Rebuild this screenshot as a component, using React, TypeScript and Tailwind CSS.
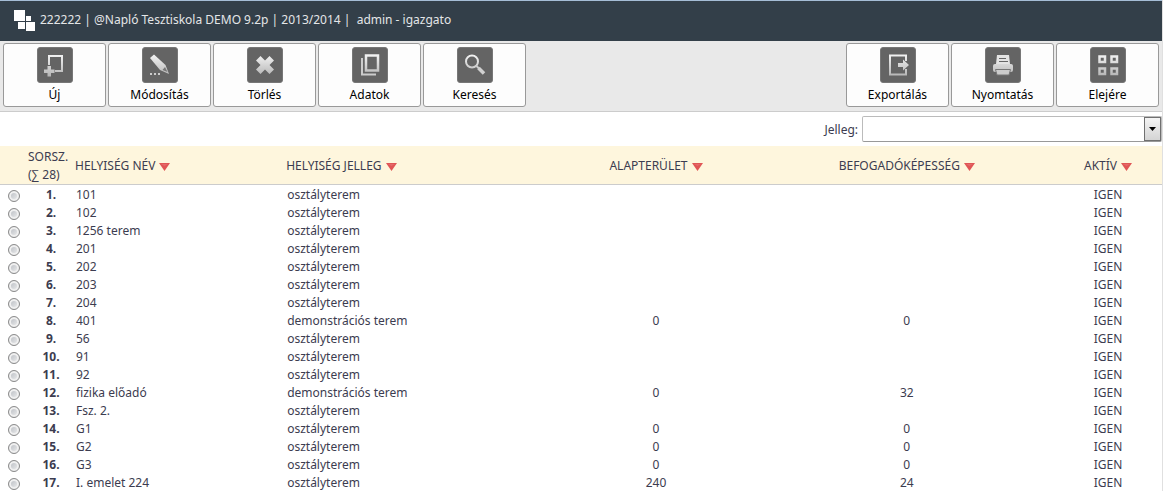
import { useState } from 'react'
import type { ReactNode } from 'react'

type Room = {
  id: number
  name: string
  kind: string
  area?: number
  capacity?: number
}

const CLASSROOM = 'osztályterem'
const DEMO_ROOM = 'demonstrációs terem'

const rooms: Room[] = [
  { id: 1, name: '101', kind: CLASSROOM },
  { id: 2, name: '102', kind: CLASSROOM },
  { id: 3, name: '1256 terem', kind: CLASSROOM },
  { id: 4, name: '201', kind: CLASSROOM },
  { id: 5, name: '202', kind: CLASSROOM },
  { id: 6, name: '203', kind: CLASSROOM },
  { id: 7, name: '204', kind: CLASSROOM },
  { id: 8, name: '401', kind: DEMO_ROOM, area: 0, capacity: 0 },
  { id: 9, name: '56', kind: CLASSROOM },
  { id: 10, name: '91', kind: CLASSROOM },
  { id: 11, name: '92', kind: CLASSROOM },
  { id: 12, name: 'fizika előadó', kind: DEMO_ROOM, area: 0, capacity: 32 },
  { id: 13, name: 'Fsz. 2.', kind: CLASSROOM },
  { id: 14, name: 'G1', kind: CLASSROOM, area: 0, capacity: 0 },
  { id: 15, name: 'G2', kind: CLASSROOM, area: 0, capacity: 0 },
  { id: 16, name: 'G3', kind: CLASSROOM, area: 0, capacity: 0 },
  { id: 17, name: 'I. emelet 224', kind: CLASSROOM, area: 240, capacity: 24 },
]

const icons: Record<string, ReactNode> = {
  new: (
    <>
      <path d="M12 18V9h13v15h-7" fill="none" stroke="url(#metal)" strokeWidth="2" />
      <path d="M10.500 19h3.500v3.500h3.500V26H14v3.500h-3.500V26H7v-3.500h3.500z" fill="url(#metal)" />
    </>
  ),
  edit: (
    <>
      <path d="M8 11l4-3.500 11.500 10.500 3.500 9-9-4z" fill="url(#metal)" />
      <path d="M23 20l2.500 5-5-2z" fill="#777" />
      <path d="M8 26h2v2H8zM12 26h2v2h-2zM16 26h2v2h-2z" fill="#ccc" />
    </>
  ),
  remove: (
    <path
      d="M13.500 9L18 13.500 22.500 9l4.500 4.500-4.500 4.500 4.500 4.500-4.500 4.500-4.500-4.500-4.500 4.500L9 22.500 13.500 18 9 13.500z"
      fill="url(#metal)"
    />
  ),
  data: (
    <>
      <path d="M14 8.500h12v15H14z" fill="none" stroke="url(#metal)" strokeWidth="2.500" />
      <path d="M10 11v16.500h14" fill="none" stroke="#ccc" strokeWidth="2" />
    </>
  ),
  search: (
    <>
      <circle cx="15" cy="14.500" r="6" fill="none" stroke="url(#metal)" strokeWidth="2" />
      <path d="M19 18.500l3 3" stroke="#ccc" strokeWidth="2" />
      <path d="M21.500 21l5.500 5.500" stroke="#d0d0d0" strokeWidth="3.500" />
    </>
  ),
  export: (
    <>
      <path d="M26 14V8.500H10v19h16V22" fill="none" stroke="url(#metal)" strokeWidth="2" />
      <path d="M18 16h5v-3.500l6 5.500-6 5.500V20h-5z" fill="url(#metal)" />
    </>
  ),
  print: (
    <>
      <path d="M11 17l1-9h12l1 9z" fill="#e4e4e4" />
      <path d="M14 11.500h7M14 14.500h9" stroke="#666" />
      <rect x="8" y="17" width="20" height="8" rx="2" fill="url(#metal)" />
      <path d="M10.500 22.500h15l-1.500 5.500H12z" fill="#ccc" stroke="#777" />
    </>
  ),
  home: (
    <path
      d="M9.500 9.500h5.500v5.500h-5.500zM21.500 9.500h5.500v5.500h-5.500zM9.500 21.500h5.500v5.500h-5.500zM21.500 21.500h5.500v5.500h-5.500z"
      fill="none"
      stroke="url(#metal)"
      strokeWidth="2.500"
    />
  ),
}

function ToolButton({ icon, label }: { icon: string; label: string }) {
  return (
    <button
      type="button"
      className="flex h-16 w-[103px] flex-col items-center rounded-[3px] border border-[#999] bg-[#fdfdfd] pt-[3px] leading-6 text-black"
    >
      <svg viewBox="0 0 36 36" className="size-9 shrink-0" aria-hidden="true">
        <defs>
          <linearGradient id="metal" gradientUnits="userSpaceOnUse" x1="0" y1="8" x2="0" y2="28">
            <stop offset="0" stopColor="#f2f2f2" />
            <stop offset="1" stopColor="#b8b8b8" />
          </linearGradient>
        </defs>
        <rect x="0.500" y="0.500" width="35" height="35" rx="2.500" fill="#646464" stroke="#777" />
        {icons[icon]}
      </svg>
      {label}
    </button>
  )
}

function SortButton({ label }: { label: string }) {
  return (
    <button type="button" className="inline-flex items-center gap-1 whitespace-nowrap">
      {label}
      <svg viewBox="0 0 11 8" className="mt-0.5 h-2 w-[11px]" aria-hidden="true">
        <path d="M0 0h11L5.500 8z" fill="#e05555" />
        <path d="M2 1h7L5.500 3z" fill="#e56a6a" />
      </svg>
    </button>
  )
}

export default function App() {
  const [selected, setSelected] = useState<number | null>(null)

  return (
    <div className="border-r border-[#e0e0e0] bg-white font-['Noto_Sans','Open_Sans',sans-serif] text-xs text-[#3c3c50]">
      <header className="flex h-[41px] items-center gap-1 border-t border-[#a5bdd6] bg-[#333f49] pl-3.5 text-[#e4e6e8]">
        <svg viewBox="0 0 22 22" className="size-[22px]" aria-hidden="true">
          <path d="M0 0h11v11H0zM12 6h5v5h-5zM4 12h7v7H4zM12 12h9v9h-9z" fill="#fff" />
        </svg>
        <span className="whitespace-pre pb-0.5">
          {'222222 | @Napló Tesztiskola DEMO 9.2p | 2013/2014 |  admin - igazgato'}
        </span>
      </header>

      <nav className="flex justify-between border-b border-[#ccc] bg-[#e9e9e9] px-[3px] pt-0.5 pb-1">
        <div className="flex gap-0.5">
          <ToolButton icon="new" label="Új" />
          <ToolButton icon="edit" label="Módosítás" />
          <ToolButton icon="remove" label="Törlés" />
          <ToolButton icon="data" label="Adatok" />
          <ToolButton icon="search" label="Keresés" />
        </div>
        <div className="flex gap-0.5">
          <ToolButton icon="export" label="Exportálás" />
          <ToolButton icon="print" label="Nyomtatás" />
          <ToolButton icon="home" label="Elejére" />
        </div>
      </nav>

      <div className="flex h-[34px] items-center justify-end gap-1">
        <label htmlFor="kind" className="pt-0.5">Jelleg:</label>
        <div className="relative w-[300px]">
          <select
            id="kind"
            className="block h-[26px] w-full appearance-none rounded-[2px] border border-[#bbb] border-b-[#999] bg-white px-1"
          >
            <option value=""></option>
            <option value="classroom">{CLASSROOM}</option>
            <option value="demo">{DEMO_ROOM}</option>
          </select>
          <span className="pointer-events-none absolute inset-y-px right-px flex w-[17px] items-center justify-center border border-[#707070] bg-linear-to-b from-[#f4f4f4] to-[#d4d4d4]">
            <svg viewBox="0 0 7 4" className="h-1 w-[7px]" aria-hidden="true">
              <path d="M0 0h7L3.500 4z" fill="#000" />
            </svg>
          </span>
        </div>
      </div>

      <table className="w-full table-fixed border-collapse text-left">
        <colgroup>
          <col className="w-7" />
          <col className="w-[46px]" />
          <col className="w-[18%]" />
          <col className="w-[23%]" />
          <col className="w-[18%]" />
          <col />
          <col className="w-[108px]" />
        </colgroup>
        <thead>
          <tr className="h-[38px] border-b border-[#ccc] bg-[#fef6dd] leading-[18px] *:p-0 *:pt-0.5 *:font-normal">
            <th></th>
            <th>SORSZ. (∑ 28)</th>
            <th className="pl-px!"><SortButton label="HELYISÉG NÉV" /></th>
            <th className="pl-[3px]!"><SortButton label="HELYISÉG JELLEG" /></th>
            <th className="pl-0.5! text-center"><SortButton label="ALAPTERÜLET" /></th>
            <th className="text-center"><SortButton label="BEFOGADÓKÉPESSÉG" /></th>
            <th className="text-center"><SortButton label="AKTÍV" /></th>
          </tr>
        </thead>
        <tbody>
          {rooms.map((room) => (
            <tr key={room.id} className="h-[18px] leading-4">
              <td className="p-0">
                <input
                  type="radio"
                  name="room"
                  aria-label={room.name}
                  checked={selected === room.id}
                  onChange={() => setSelected(room.id)}
                  className="mx-auto mt-1 block size-3 appearance-none rounded-full border border-[#8c8c8c] bg-linear-to-br from-[#b4b8be] to-[#f2f2f2] inset-ring-2 inset-ring-[#f0f0f0] checked:from-[#333]"
                />
              </td>
              <td className="pt-0.5 text-center font-bold">{room.id}.</td>
              <td className="pt-0.5 pl-0.5">{room.name}</td>
              <td className="pt-0.5 pl-1">{room.kind}</td>
              <td className="pt-0.5 pl-0.5 text-center">{room.area}</td>
              <td className="pt-0.5 text-center">{room.capacity}</td>
              <td className="pt-0.5 text-center">IGEN</td>
            </tr>
          ))}
        </tbody>
      </table>
    </div>
  )
}
